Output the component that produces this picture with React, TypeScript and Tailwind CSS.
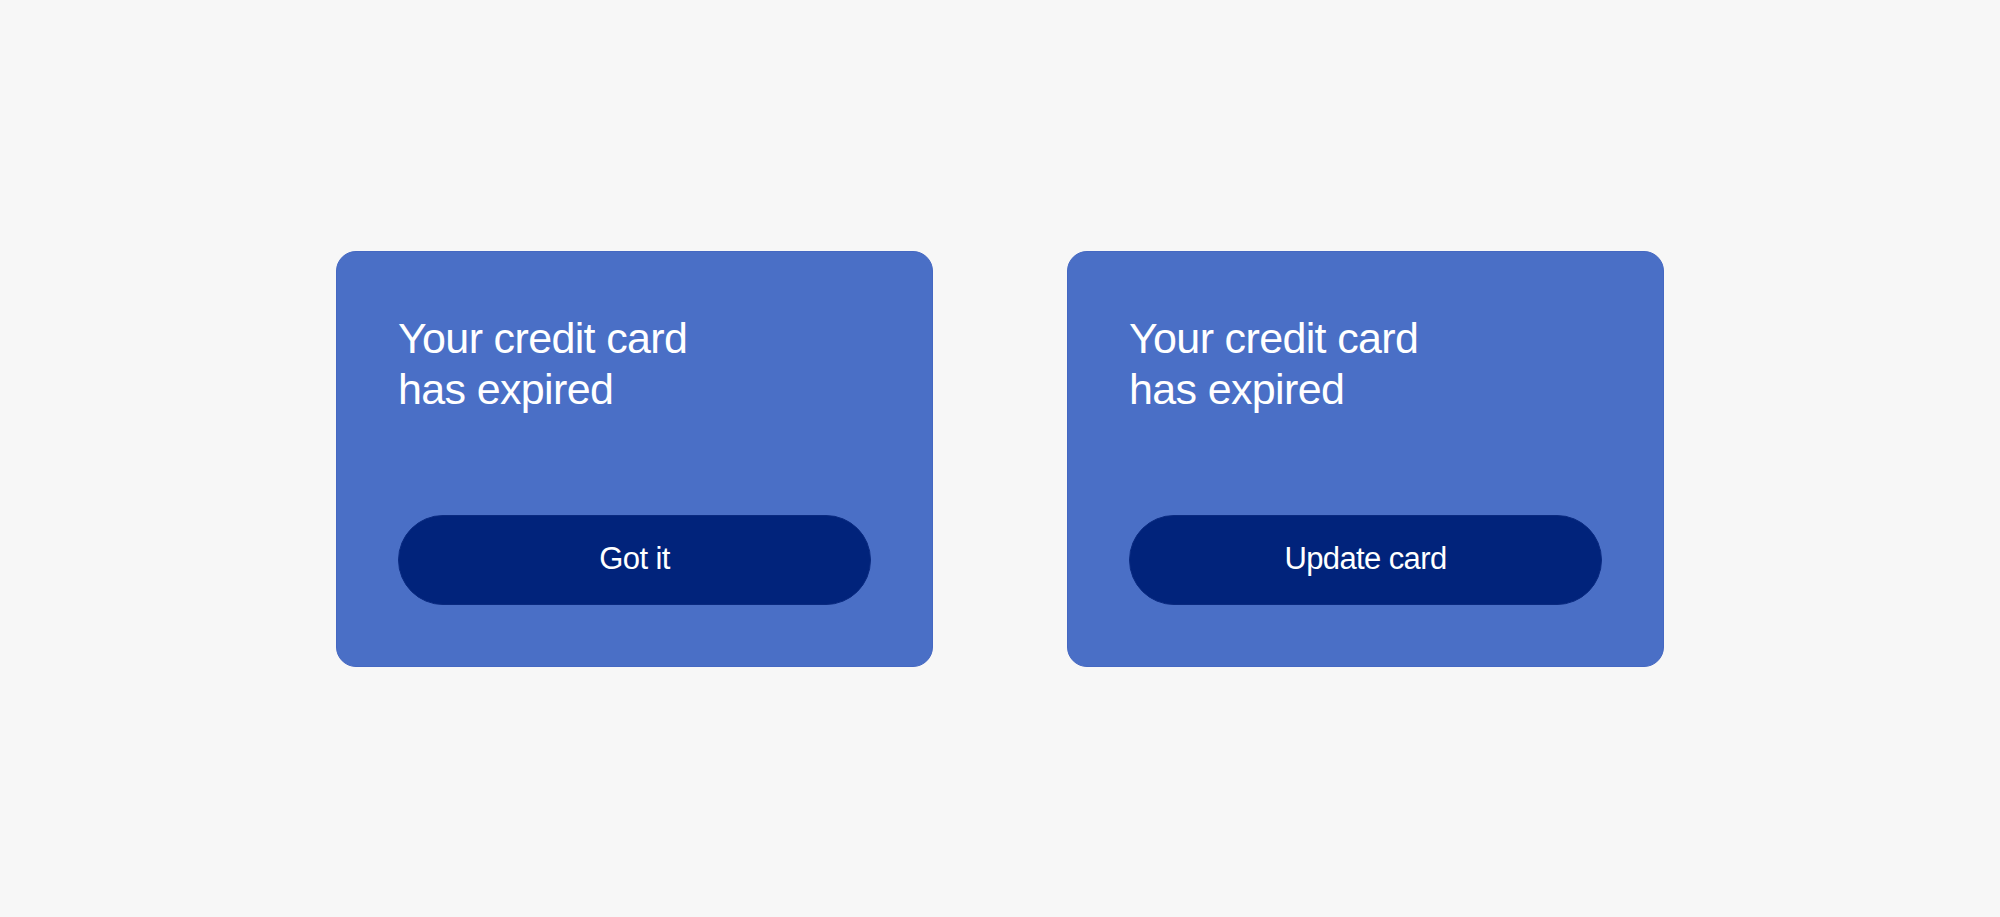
const cards = [
  { id: 1, title: ["Your credit card", "has expired"], action: "Got it" },
  { id: 2, title: ["Your credit card", "has expired"], action: "Update card" },
];

function ExpiredCard({ title, action }: { title: string[]; action: string }) {
  return (
    <div className="w-[597px] h-[416px] rounded-[20px] bg-[#4a6fc6] border border-[#4568c2] flex flex-col justify-between p-[61px]">
      <h2 className="text-white text-[43px] leading-[51px] tracking-[-0.015em] font-normal">
        {title[0]}
        <br />
        {title[1]}
      </h2>
      <button className="w-full h-[90px] rounded-full bg-[#01237b] border border-[#0a2a80] text-white text-[31px] tracking-[-0.02em] cursor-pointer hover:opacity-90">
        {action}
      </button>
    </div>
  );
}

export default function App() {
  return (
    <div className="bg-[#f7f7f7] w-screen h-screen flex items-center justify-center gap-[134px] font-['Liberation_Sans',Arial,sans-serif]">
      {cards.map((c) => (
        <ExpiredCard key={c.id} title={c.title} action={c.action} />
      ))}
    </div>
  );
}
